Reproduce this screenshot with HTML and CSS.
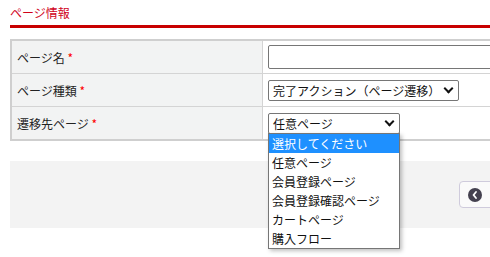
FILE: index.html
```html
<!DOCTYPE html>
<html lang="ja">
<head>
    <meta charset="UTF-8">
    <meta name="viewport" content="width=device-width, initial-scale=1.0">
    <title>ページ情報</title>
    <link rel="stylesheet" href="styles.css">
</head>
<body>
    <div class="page">
        <h2 class="section-title">ページ情報</h2>

        <table class="form-table">
            <tr>
                <th>ページ名 <span class="req">*</span></th>
                <td><input type="text" class="text-input"></td>
            </tr>
            <tr>
                <th>ページ種類 <span class="req">*</span></th>
                <td>
                    <div class="select wide">完了アクション（ページ遷移）<span class="caret"></span></div>
                </td>
            </tr>
            <tr>
                <th>遷移先ページ <span class="req">*</span></th>
                <td class="dropdown-cell">
                    <div class="select">任意ページ<span class="caret"></span></div>
                    <ul class="dropdown">
                        <li class="selected">選択してください</li>
                        <li>任意ページ</li>
                        <li>会員登録ページ</li>
                        <li>会員登録確認ページ</li>
                        <li>カートページ</li>
                        <li>購入フロー</li>
                    </ul>
                </td>
            </tr>
        </table>

        <div class="footer-bar">
            <a class="back-button">
                <span class="back-icon">
                    <svg width="14" height="14" viewBox="0 0 14 14">
                        <circle cx="7" cy="7" r="7" fill="#44414f"/>
                        <path d="M8 4 L5.5 7 L8 10" stroke="#fff" stroke-width="1.8" fill="none" stroke-linecap="round" stroke-linejoin="round"/>
                    </svg>
                </span>
            </a>
        </div>
    </div>
</body>
</html>
```

FILE: styles.css
```css
html {
    overflow: hidden;
}
body {
    margin: 0;
    padding: 0;
    min-height: 100vh;
    font-family: "Noto Sans CJK JP", "Noto Sans", sans-serif;
    font-size: 12px;
    color: #222;
    background-color: #fff;
}
.page {
    width: 640px;
    padding-left: 10px;
}
.section-title {
    margin: 0;
    padding: 3px 0 3px;
    font-size: 12px;
    font-weight: normal;
    line-height: 19px;
    color: #d0021b;
    border-bottom: 3px solid #c80000;
}
.form-table {
    margin-top: 11px;
    width: 100%;
    border-collapse: collapse;
    border: 2px solid #cfcfcf;
}
.form-table th,
.form-table td {
    border: 1px solid #d4d4d4;
    height: 32px;
    padding: 0 5px;
    text-align: left;
    font-weight: normal;
}
.form-table th {
    width: 240px;
    background-color: #f2f3f3;
}
.req {
    color: #f00;
}
.text-input {
    display: block;
    width: 300px;
    height: 24px;
    box-sizing: border-box;
    border: 1px solid #767676;
    border-radius: 2px;
    margin: 0;
}
.select {
    position: relative;
    width: 132px;
    height: 21px;
    box-sizing: border-box;
    border: 1px solid #767676;
    border-radius: 2px;
    padding-left: 4px;
    line-height: 19px;
    color: #111;
}
.select.wide {
    width: 191px;
}
.caret {
    position: absolute;
    right: 6px;
    top: 4px;
    width: 5px;
    height: 5px;
    border-right: 2px solid #111;
    border-bottom: 2px solid #111;
    transform: rotate(45deg);
}
.dropdown-cell {
    position: relative;
}
.dropdown {
    position: absolute;
    left: 5px;
    top: 26px;
    z-index: 2;
    width: 132px;
    box-sizing: border-box;
    margin: 0;
    padding: 0;
    list-style: none;
    background-color: #fff;
    border: 1px solid #767676;
    box-shadow: 2px 2px 4px rgba(0, 0, 0, 0.25);
}
.dropdown li {
    height: 19px;
    line-height: 19px;
    padding-left: 3px;
    color: #111;
}
.dropdown li.selected {
    background-color: #1e90ff;
    color: #fff;
}
.footer-bar {
    margin-top: 20px;
    height: 67px;
    background-color: #f3f3f3;
    display: flex;
    align-items: center;
    padding-left: 449px;
}
.back-button {
    display: flex;
    align-items: center;
    justify-content: center;
    width: 60px;
    height: 27px;
    box-sizing: border-box;
    border: 1px solid #cfcbdc;
    border-radius: 4px;
    background-color: #fafafa;
    padding-right: 28px;
}
.back-icon {
    display: flex;
}
```
